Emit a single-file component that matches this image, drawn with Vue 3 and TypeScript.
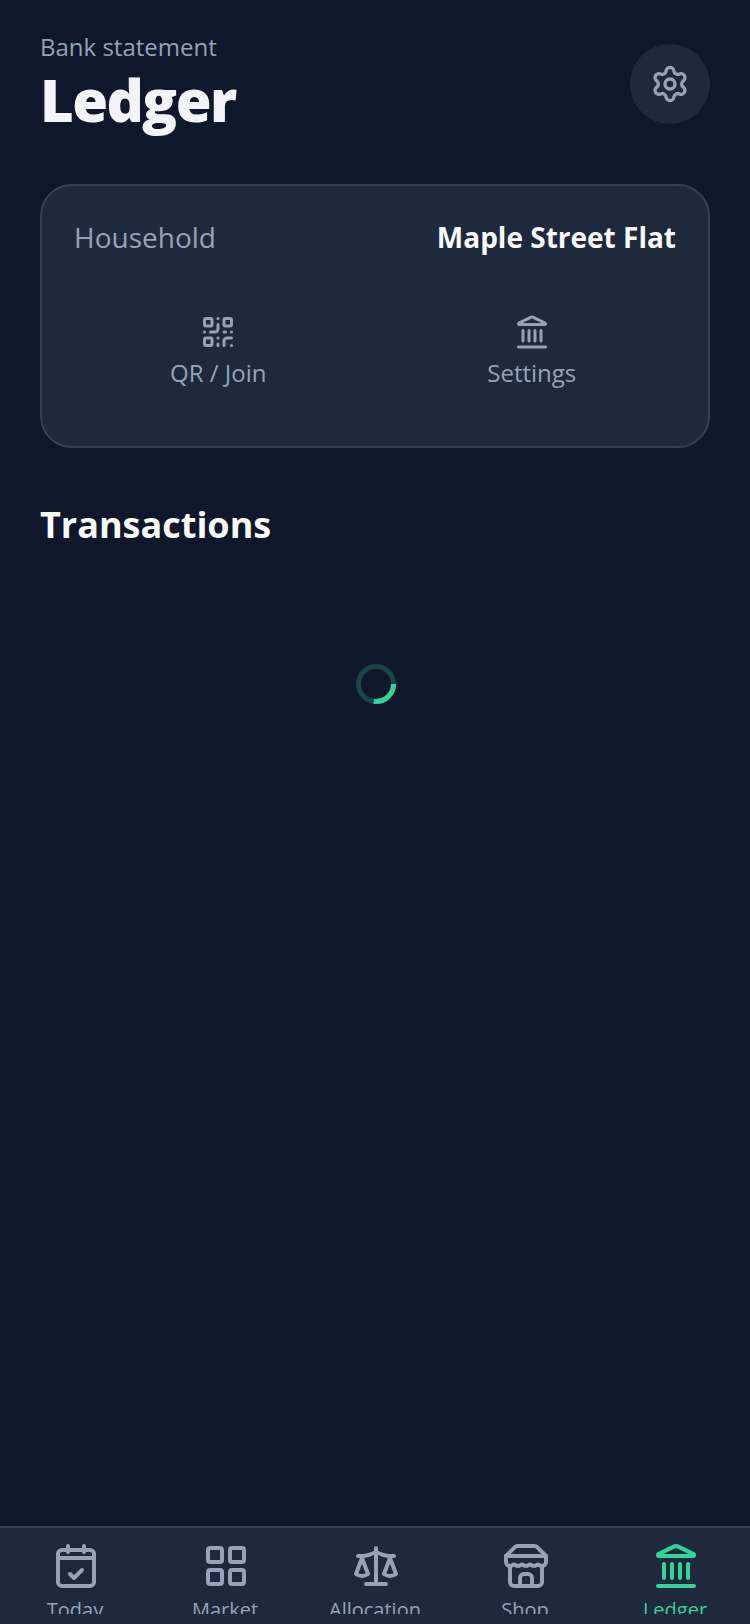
<script setup lang="ts">
const navItems = [
  { key: 'today', label: 'Today' },
  { key: 'market', label: 'Market' },
  { key: 'allocation', label: 'Allocation' },
  { key: 'shop', label: 'Shop' },
  { key: 'ledger', label: 'Ledger', active: true },
]
</script>

<template>
  <div class="screen">
    <main class="content">
      <header class="page-header">
        <div class="titles">
          <div class="eyebrow">Bank statement</div>
          <h1 class="title">Ledger</h1>
        </div>
        <button class="gear-btn" aria-label="Settings">
          <svg class="icon gear" viewBox="0 0 24 24">
            <path d="M9.671 4.136a2.34 2.34 0 0 1 4.659 0 2.34 2.34 0 0 0 3.319 1.915 2.34 2.34 0 0 1 2.33 4.033 2.34 2.34 0 0 0 0 3.831 2.34 2.34 0 0 1-2.33 4.033 2.34 2.34 0 0 0-3.319 1.915 2.34 2.34 0 0 1-4.659 0 2.34 2.34 0 0 0-3.32-1.915 2.34 2.34 0 0 1-2.33-4.033 2.34 2.34 0 0 0 0-3.831A2.34 2.34 0 0 1 6.35 6.051a2.34 2.34 0 0 0 3.319-1.915" />
            <circle cx="12" cy="12" r="3" />
          </svg>
        </button>
      </header>

      <section class="card">
        <div class="household">
          <span class="household-label">Household</span>
          <span class="household-name">Maple Street Flat</span>
        </div>
        <div class="actions">
          <button class="action">
            <svg class="icon action-icon" viewBox="0 0 24 24">
              <rect width="5" height="5" x="3" y="3" rx="1" />
              <rect width="5" height="5" x="16" y="3" rx="1" />
              <rect width="5" height="5" x="3" y="16" rx="1" />
              <path d="M21 16h-3a2 2 0 0 0-2 2v3" />
              <path d="M21 21v.01" />
              <path d="M12 7v3a2 2 0 0 1-2 2H7" />
              <path d="M3 12h.01" />
              <path d="M12 3h.01" />
              <path d="M12 16v.01" />
              <path d="M16 12h1" />
              <path d="M21 12v.01" />
              <path d="M12 21v-1" />
            </svg>
            <span>QR / Join</span>
          </button>
          <button class="action">
            <svg class="icon action-icon" viewBox="0 0 24 24">
              <path d="M10 18v-7" />
              <path d="M11.12 2.198a2 2 0 0 1 1.76.006l7.866 3.847c.476.233.31.949-.22.949H3.474c-.53 0-.695-.716-.22-.949z" />
              <path d="M14 18v-7" />
              <path d="M18 18v-7" />
              <path d="M3 22h18" />
              <path d="M6 18v-7" />
            </svg>
            <span>Settings</span>
          </button>
        </div>
      </section>

      <h2 class="section-title">Transactions</h2>
      <div class="loading">
        <svg class="spinner" viewBox="0 0 40 40">
          <circle class="spinner-track" cx="20" cy="20" r="17.5" />
          <circle class="spinner-arc" cx="20" cy="20" r="17.5" />
        </svg>
      </div>
    </main>

    <nav class="tabbar">
      <div v-for="item in navItems" :key="item.key" class="tab" :class="{ active: item.active }">
        <svg class="icon tab-icon" viewBox="0 0 24 24">
          <template v-if="item.key === 'today'">
            <path d="M8 2v3" />
            <path d="M16 2v3" />
            <rect width="18" height="18" x="3" y="4" rx="2" />
            <path d="M3 8h18" />
            <path d="m9 16 2 2 4-4" />
          </template>
          <template v-else-if="item.key === 'market'">
            <rect width="7" height="7" x="3" y="3" rx="1" />
            <rect width="7" height="7" x="14" y="3" rx="1" />
            <rect width="7" height="7" x="14" y="14" rx="1" />
            <rect width="7" height="7" x="3" y="14" rx="1" />
          </template>
          <template v-else-if="item.key === 'allocation'">
            <path d="m16 16 3-8 3 8c-.87.65-1.92 1-3 1s-2.13-.35-3-1Z" />
            <path d="m2 16 3-8 3 8c-.87.65-1.92 1-3 1s-2.13-.35-3-1Z" />
            <path d="M7 21h10" />
            <path d="M12 3v18" />
            <path d="M3 7h2c2 0 5-1 7-2 2 1 5 2 7 2h2" />
          </template>
          <template v-else-if="item.key === 'shop'">
            <path d="m2 7 4.41-4.41A2 2 0 0 1 7.83 2h8.34a2 2 0 0 1 1.42.59L22 7" />
            <path d="M4 12v8a2 2 0 0 0 2 2h12a2 2 0 0 0 2-2v-8" />
            <path d="M15 22v-4a2 2 0 0 0-2-2h-2a2 2 0 0 0-2 2v4" />
            <path d="M2 7h20" />
            <path d="M22 7v3a2 2 0 0 1-2 2a2.7 2.7 0 0 1-1.59-.63.7.7 0 0 0-.82 0A2.7 2.7 0 0 1 16 12a2.7 2.7 0 0 1-1.59-.63.7.7 0 0 0-.82 0A2.7 2.7 0 0 1 12 12a2.7 2.7 0 0 1-1.59-.63.7.7 0 0 0-.82 0A2.7 2.7 0 0 1 8 12a2.7 2.7 0 0 1-1.59-.63.7.7 0 0 0-.82 0A2.7 2.7 0 0 1 4 12a2 2 0 0 1-2-2V7" />
          </template>
          <template v-else>
            <path d="M10 18v-7" />
            <path d="M11.12 2.198a2 2 0 0 1 1.76.006l7.866 3.847c.476.233.31.949-.22.949H3.474c-.53 0-.695-.716-.22-.949z" />
            <path d="M14 18v-7" />
            <path d="M18 18v-7" />
            <path d="M3 22h18" />
            <path d="M6 18v-7" />
          </template>
        </svg>
        <span class="tab-label">{{ item.label }}</span>
      </div>
    </nav>
  </div>
</template>

<style scoped>
.screen {
  width: 750px;
  height: 1624px;
  display: flex;
  flex-direction: column;
  background: #0f172a;
  font-family: 'Open Sans', 'Noto Sans', sans-serif;
  overflow: hidden;
}

.content {
  flex: 1;
  min-height: 0;
  padding: 31px 40px 0;
  display: flex;
  flex-direction: column;
}

.page-header {
  display: flex;
  align-items: flex-start;
  justify-content: space-between;
}

.eyebrow {
  color: #94a3b8;
  font-size: 24px;
  line-height: 32px;
}

.title {
  margin: 3px 0 0;
  color: #f1f5f9;
  font-size: 58px;
  font-weight: 800;
  line-height: 68px;
  letter-spacing: -1.6px;
}

.gear-btn {
  width: 80px;
  height: 80px;
  margin-top: 13px;
  padding: 0;
  border: none;
  border-radius: 50%;
  background: #1e293b;
  display: flex;
  align-items: center;
  justify-content: center;
}

.icon {
  fill: none;
  stroke: currentColor;
  stroke-width: 2;
  stroke-linecap: round;
  stroke-linejoin: round;
}

.gear {
  width: 40px;
  height: 40px;
  color: #94a3b8;
}

.card {
  margin-top: 50px;
  height: 264px;
  box-sizing: border-box;
  padding: 31px 32px 32px;
  border: 2px solid #334155;
  border-radius: 32px;
  background: #1e293b;
}

.household {
  display: flex;
  align-items: center;
  justify-content: space-between;
  font-size: 28px;
  line-height: 40px;
}

.household-label {
  color: #94a3b8;
}

.household-name {
  color: #f8fafc;
  font-weight: 700;
}

.actions {
  margin-top: 57px;
  display: flex;
  gap: 25px;
}

.action {
  flex: 1;
  padding: 0;
  border: none;
  background: none;
  color: #94a3b8;
  font-family: inherit;
  font-size: 24px;
  line-height: 30px;
  display: flex;
  flex-direction: column;
  align-items: center;
  gap: 8px;
}

.action-icon {
  width: 36px;
  height: 36px;
}

.section-title {
  margin: 51px 0 0;
  color: #f8fafc;
  font-size: 36px;
  font-weight: 700;
  line-height: 52px;
}

.loading {
  margin-top: 113px;
  padding-left: 2px;
  display: flex;
  justify-content: center;
}

.spinner {
  width: 40px;
  height: 40px;
  fill: none;
  stroke-width: 5;
}

.spinner-track {
  stroke: rgba(52, 211, 153, 0.25);
}

.spinner-arc {
  stroke: #34d399;
  stroke-dasharray: 29.6 110;
}

.tabbar {
  height: 98px;
  box-sizing: border-box;
  padding-bottom: 10px;
  border-top: 2px solid #334155;
  background: #1e293b;
  display: flex;
}

.tab {
  flex: 1;
  min-width: 0;
  padding-top: 14px;
  overflow: hidden;
  color: #94a3b8;
  display: flex;
  flex-direction: column;
  align-items: center;
  gap: 6px;
}

.tab.active {
  color: #34d399;
}

.tab-icon {
  width: 48px;
  height: 48px;
  margin-left: 2px;
  flex-shrink: 0;
}

.tab-label {
  font-size: 20px;
  line-height: 28px;
}
</style>
